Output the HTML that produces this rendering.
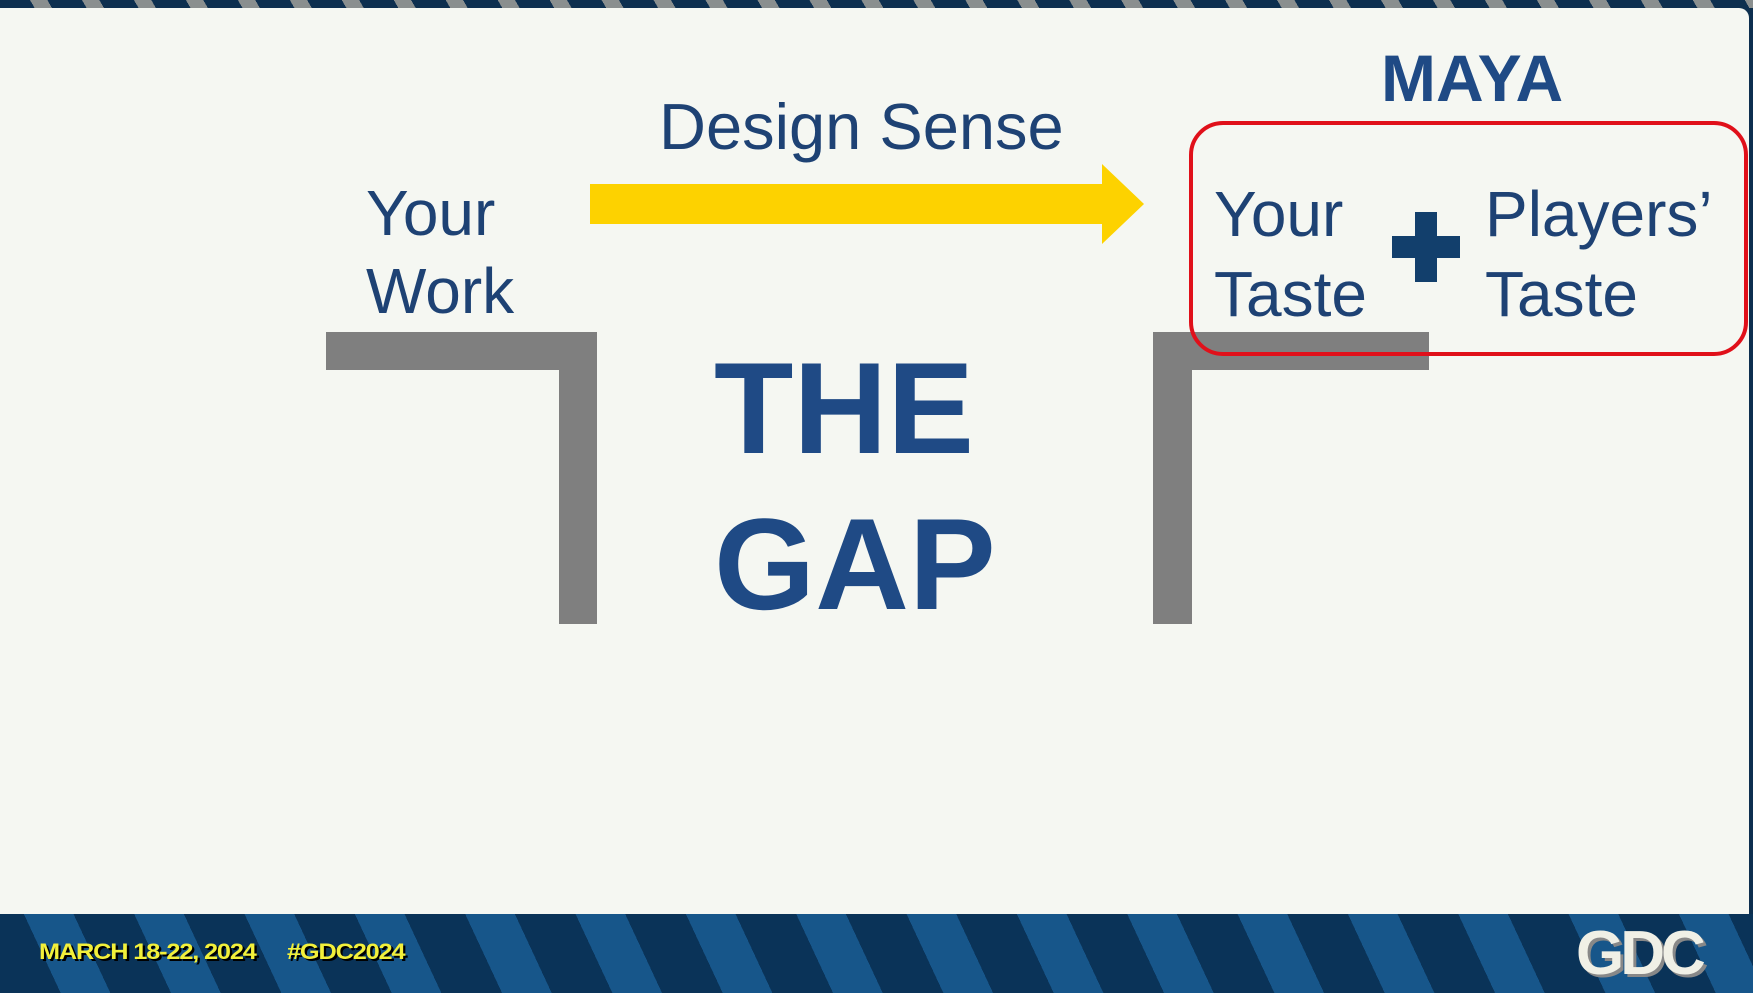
<!DOCTYPE html>
<html><head><meta charset="utf-8"><style>
*{margin:0;padding:0}
body{width:1753px;height:993px;overflow:hidden;background:#0d2f4f;position:relative;font-family:"Liberation Sans",sans-serif}
.slide{position:absolute;left:0;top:8px;width:1749px;height:906px;background:#f5f7f2;border-radius:0 10px 0 0}
.t{position:absolute;color:#1e4274;white-space:nowrap}
.b{position:absolute;background:#7f7f7f}
.band{position:absolute;left:0;top:914px;width:1753px;height:79px;background:repeating-linear-gradient(65deg,#0a3358 0 55px,#17568a 55px 100px)}
</style></head><body>
<div style="position:absolute;left:0;top:0;width:1753px;height:8px;background:repeating-linear-gradient(60deg,#0d2f4f 0 30px,#8a8f8f 30px 45px)"></div>
<div class="slide"></div>
<div class="t" style="left:366px;top:174px;font-size:64px;line-height:78px">Your<br>Work</div>
<div class="t" style="left:659px;top:88px;font-size:65px;line-height:78px">Design Sense</div>
<div class="b" style="left:326px;top:332px;width:271px;height:38px"></div>
<div class="b" style="left:559px;top:332px;width:38px;height:292px"></div>
<div class="b" style="left:1153px;top:332px;width:276px;height:38px"></div>
<div class="b" style="left:1153px;top:332px;width:39px;height:292px"></div>
<svg style="position:absolute;left:0;top:0" width="1753" height="993">
<polygon points="590,184 1102,184 1102,164 1144,204 1102,244 1102,224 590,224" fill="#fdd200"/>
<rect x="1191" y="123" width="555" height="231" rx="32" fill="none" stroke="#e0101a" stroke-width="4"/>
</svg>
<div class="t" style="left:1381px;top:40px;font-size:66px;font-weight:bold;color:#1f4a85">MAYA</div>
<div class="t" style="left:1214px;top:174px;font-size:64px;line-height:80px">Your<br>Taste</div>
<div class="t" style="left:1485px;top:174px;font-size:64px;line-height:80px">Players’<br>Taste</div>
<div style="position:absolute;left:1392px;top:236px;width:68px;height:22px;background:#123f6c"></div>
<div style="position:absolute;left:1415px;top:212px;width:22px;height:70px;background:#123f6c"></div>
<div class="t" style="left:714px;top:330px;font-size:130px;font-weight:bold;line-height:156px;color:#1f4a85">THE<br>GAP</div>
<div class="band"></div>
<div class="t" style="left:39px;top:939px;font-size:22px;font-weight:bold;color:#f2f03a;letter-spacing:-1px;text-shadow:2px 2px 0 #000;transform:scaleX(1.15);transform-origin:left">MARCH 18-22, 2024</div>
<div class="t" style="left:287px;top:939px;font-size:22px;font-weight:bold;color:#f2f03a;letter-spacing:-1px;text-shadow:2px 2px 0 #000;transform:scaleX(1.15);transform-origin:left">#GDC2024</div>
<div class="t" style="left:1576px;top:918px;font-size:62px;font-weight:bold;color:#f0f0e6;letter-spacing:-4px;text-shadow:3px 3px 0 #888">GDC</div>
</body></html>
